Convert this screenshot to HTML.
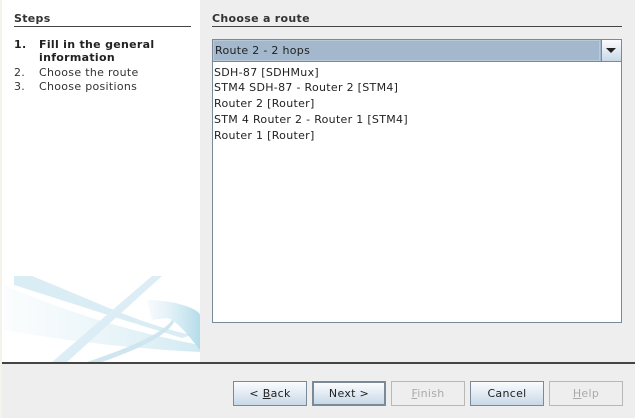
<!DOCTYPE html>
<html><head><style>
*{margin:0;padding:0;box-sizing:border-box}
body{width:635px;height:418px;background:#eeeeee;font-family:"DejaVu Sans","Liberation Sans",sans-serif;font-size:11px;color:#333;position:relative;overflow:hidden;letter-spacing:0.3px}
.abs{position:absolute}
#left{left:2px;top:0;width:198px;height:362px;background:#fff}
#edge{left:0;top:0;width:2px;height:418px;background:#f3f2ed}
.t{white-space:nowrap;line-height:13px}
.btn{position:absolute;top:381px;width:74px;height:25px;border:1px solid #7a8a99;background:linear-gradient(#fafcfe,#c9d8e8);text-align:center;line-height:23px;color:#222}
.dis{background:#eeeeee;border-color:#b8b8b8;color:#aaa}
.item{position:absolute;left:214px;white-space:nowrap;color:#222}
</style></head><body>
<div id="edge" class="abs"></div>
<div id="left" class="abs">
<svg width="198" height="362" style="position:absolute;left:0;top:0">
<defs>
<linearGradient id="g1" x1="0" x2="1"><stop offset="0" stop-color="#d8ecf4" stop-opacity=".2"/><stop offset="1" stop-color="#b4dcea"/></linearGradient>
</defs>
<path d="M12 276 L30 276 C90 300 140 325 190 335 L180 338 C120 320 60 300 12 285Z" fill="#daedf5"/>
<path d="M2 285 C60 310 120 330 198 345 L198 352 C120 348 60 340 2 330Z" fill="url(#g1)" opacity=".6"/>
<path d="M160 276 L150 276 L50 362 L65 362Z" fill="#dcedf5"/>
<path d="M145 300 C175 300 198 310 198 315 L198 350 C190 340 175 320 165 318 L150 320Z" fill="url(#g1)"/>
<path d="M170 320 C160 335 120 350 85 362 L100 362 C140 348 165 335 172 322Z" fill="#cfe6f0"/>
</svg>
<div class="abs t" style="left:12px;top:12px;font-weight:bold;color:#333">Steps</div>
<div class="abs" style="left:12px;top:26px;width:177px;height:1px;background:#444"></div>
<div class="abs t" style="left:12px;top:38px;font-weight:bold;color:#222">1.</div>
<div class="abs t" style="left:37px;top:38px;font-weight:bold;color:#222">Fill in the general<br>information</div>
<div class="abs t" style="left:12px;top:66px">2.</div>
<div class="abs t" style="left:37px;top:66px">Choose the route</div>
<div class="abs t" style="left:12px;top:80px">3.</div>
<div class="abs t" style="left:37px;top:80px">Choose positions</div>
</div>
<div class="abs t" style="left:212px;top:12px;font-weight:bold">Choose a route</div>
<div class="abs" style="left:212px;top:26px;width:410px;height:1px;background:#444"></div>
<div class="abs" style="left:212px;top:39px;width:410px;height:23px;border:1px solid #7a8a99;background:#a3b8cc"></div>
<div class="abs" style="left:213px;top:40px;width:387px;height:21px;border:1px solid #b8cad8"></div>
<div class="abs t" style="left:215px;top:44px;color:#222">Route 2 - 2 hops</div>
<div class="abs" style="left:601px;top:40px;width:20px;height:21px;background:linear-gradient(#fafcfe,#c9d8e8);border-left:1px solid #7a8a99"></div>
<div class="abs" style="left:606px;top:48px;width:0;height:0;border-left:5px solid transparent;border-right:5px solid transparent;border-top:5px solid #222"></div>
<div class="abs" style="left:212px;top:62px;width:410px;height:261px;border:1px solid #7a8a99;border-top:none;background:#fff"></div>
<div class="item t" style="top:66px">SDH-87 [SDHMux]</div>
<div class="item t" style="top:81px">STM4 SDH-87 - Router 2 [STM4]</div>
<div class="item t" style="top:97px">Router 2 [Router]</div>
<div class="item t" style="top:113px">STM 4 Router 2 - Router 1 [STM4]</div>
<div class="item t" style="top:129px">Router 1 [Router]</div>
<div class="abs" style="left:2px;top:362px;width:633px;height:2px;background:#444"></div>
<div class="btn" style="left:233px">&lt; <u>B</u>ack</div>
<div class="btn" style="left:312px;border:2px solid #7a8a99;line-height:21px">Next &gt;</div>
<div class="btn dis" style="left:391px"><u>F</u>inish</div>
<div class="btn" style="left:470px">Cancel</div>
<div class="btn dis" style="left:549px"><u>H</u>elp</div>
</body></html>
